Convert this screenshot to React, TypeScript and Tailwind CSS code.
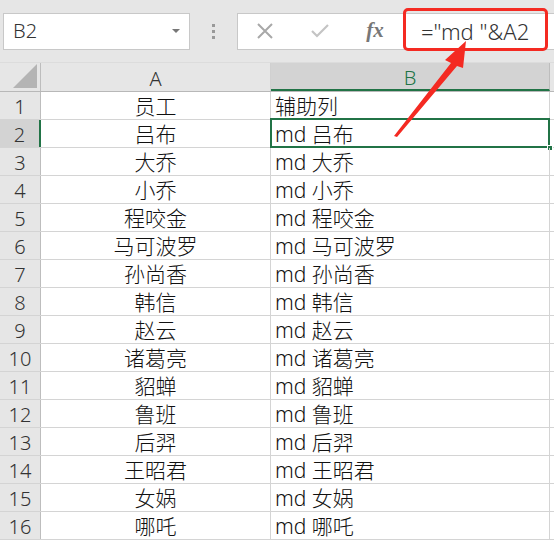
const names = ['员工', '吕布', '大乔', '小乔', '程咬金', '马可波罗', '孙尚香', '韩信', '赵云', '诸葛亮', '貂蝉', '鲁班', '后羿', '王昭君', '女娲', '哪吒']

const font = { fontFamily: '"Noto Sans", "Noto Sans CJK SC", sans-serif' }

export default function App() {
  return (
    <div className="relative w-[554px] h-[543px] overflow-hidden bg-white text-[#222] font-light" style={font}>
      {/* formula bar */}
      <div className="flex items-center h-[63px] bg-[#e6e6e6] border-b border-[#dcdcdc]">
        <div className="ml-[3px] w-[187px] h-[37px] bg-white border border-[#c8c8c8] flex items-center justify-between pl-[9px] pr-[8px]">
          <span className="text-[20px] text-[#333]">B2</span>
          <svg width="10" height="6" viewBox="0 0 10 6"><path d="M1 1 L5 5 L9 1 Z" fill="#777" /></svg>
        </div>
        <div className="w-[47px] flex flex-col items-center gap-[3px]">
          <span className="w-[3px] h-[3px] bg-[#999]" />
          <span className="w-[3px] h-[3px] bg-[#999]" />
          <span className="w-[3px] h-[3px] bg-[#999]" />
        </div>
        <div className="flex-1 h-[37px] bg-white border border-[#c8c8c8] border-r-0 flex items-center">
          <div className="w-[54px] flex justify-center">
            <svg width="18" height="18" viewBox="0 0 18 18"><path d="M2 2 L16 16 M16 2 L2 16" stroke="#a8a8a8" strokeWidth="2" /></svg>
          </div>
          <div className="w-[56px] flex justify-center">
            <svg width="20" height="16" viewBox="0 0 20 16"><path d="M2 8 L7 13 L18 2" stroke="#c4c4c4" strokeWidth="2.2" fill="none" /></svg>
          </div>
          <div className="w-[54px] flex justify-center">
            <span className="text-[21px] italic font-bold text-[#777]" style={{ fontFamily: '"Liberation Serif", serif' }}>fx</span>
          </div>
          <div className="pl-[19px] text-[22px] text-[#333]">="md "&amp;A2</div>
        </div>
      </div>

      {/* header row */}
      <div className="flex h-[29px] border-b border-[#b8b8b8]">
        <div className="w-[41px] bg-[#e6e6e6] border-r border-[#bdbdbd] flex items-end justify-end pr-[3px] pb-[3px]">
          <svg width="24" height="24" viewBox="0 0 24 24"><path d="M24 0 L24 24 L0 24 Z" fill="#b4b4b4" /></svg>
        </div>
        <div className="w-[230px] bg-[#e6e6e6] border-r border-[#d0d0d0] flex items-center justify-center pt-[3px] text-[20px] text-[#333]">A</div>
        <div className="w-[279px] bg-[#d3d3d3] border-b-2 border-[#217346] border-r border-r-[#bdbdbd] flex items-center justify-center pt-[3px] text-[20px] text-[#217346]">B</div>
        <div className="flex-1 bg-[#e6e6e6]" />
      </div>

      {/* rows */}
      {names.map((n, i) => {
        const row = i + 1
        const sel = row === 2
        return (
          <div key={row} className="flex h-[28px] border-b border-[#d4d4d4]">
            <div className={`w-[41px] flex items-center justify-center pt-[3px] text-[20px] text-[#333] ${sel ? 'bg-[#d3d3d3] border-r-2 border-[#217346]' : 'bg-[#e6e6e6] border-r border-[#bdbdbd]'}`}>{row}</div>
            <div className="w-[230px] border-r border-[#d4d4d4] flex items-center justify-center pt-[3px] text-[21px] text-[#111]">{n}</div>
            <div className="relative w-[279px] border-r border-[#d4d4d4] flex items-center pl-[4px] pt-[3px] text-[21px] text-[#111]">
              {row === 1 ? '辅助列' : `md ${n}`}
              {sel && (
                <>
                  <div className="absolute left-[-1px] top-[-2px] right-[-1px] bottom-[-1px] border-2 border-[#217346]" />
                  <div className="absolute right-[-4px] bottom-[-4px] w-[6px] h-[6px] bg-[#217346] border border-white" />
                </>
              )}
            </div>
            <div className="flex-1" />
          </div>
        )
      })}

      {/* annotation */}
      <div className="absolute left-[403px] top-[8px] w-[145px] h-[43px] border-[3px] border-[#f42a22] rounded-[5px]" />
      <svg className="absolute left-0 top-0" width="554" height="543" viewBox="0 0 554 543">
        <polygon points="394,136 451,63 445,60 466,41 463,68 457,66 397,137" fill="#f42a22" />
      </svg>
    </div>
  )
}
